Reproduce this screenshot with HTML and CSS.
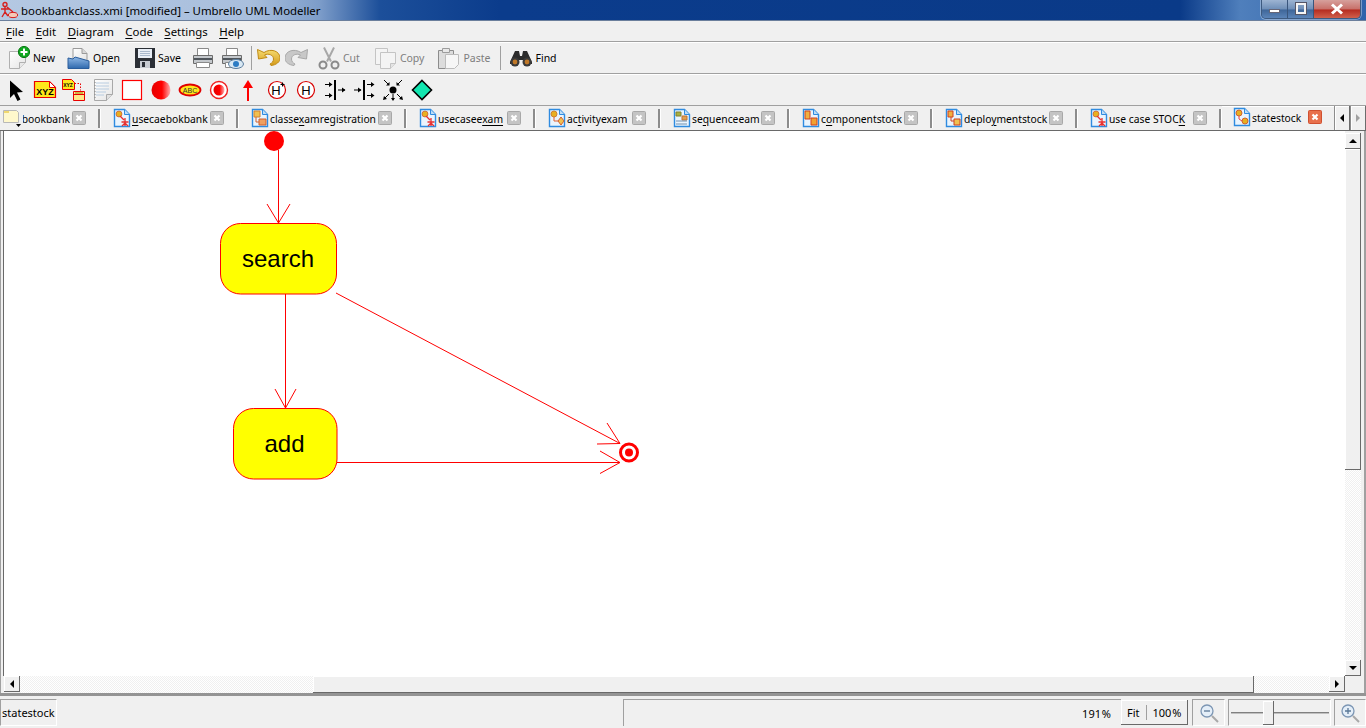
FILE: index.html
```html
<!DOCTYPE html>
<html lang="en">
<head>
  <meta charset="UTF-8">
  <title>bookbankclass.xmi [modified] – Umbrello UML Modeller</title>
  <link rel="stylesheet" href="styles.css">
</head>
<body>
  <svg class="defs" width="0" height="0">
    <defs>
      <linearGradient id="ball" x1="0" x2="1" y1="0" y2="0">
        <stop offset="0" stop-color="#e60000"/><stop offset=".55" stop-color="#ff0000"/><stop offset="1" stop-color="#ffb0b0"/>
      </linearGradient>
      <linearGradient id="sheet" x1="0" x2="1" y1="0" y2="1">
        <stop offset="0" stop-color="#ffffff"/><stop offset="1" stop-color="#e4e4e4"/>
      </linearGradient>
      <linearGradient id="blueFolder" x1="0" x2="0" y1="0" y2="1">
        <stop offset="0" stop-color="#8fb8e6"/><stop offset="1" stop-color="#2f69ad"/>
      </linearGradient>
      <linearGradient id="gold" x1="0" x2="0" y1="0" y2="1">
        <stop offset="0" stop-color="#f6dc70"/><stop offset="1" stop-color="#d49a18"/>
      </linearGradient>
      <symbol id="tabdoc" viewBox="0 0 18 20">
        <path d="M1.5 1.5h10l5 5v12h-15z" fill="#eaf4fd" stroke="#2f8be0" stroke-width="1.4"/>
        <path d="M11.5 1.5v5h5" fill="#bcdcf6" stroke="#2f8be0"/>
      </symbol>
      <symbol id="close" viewBox="0 0 14 14">
        <rect x=".5" y=".5" width="13" height="13" rx="1" fill="#c4c4c4" stroke="#a8a8a8"/>
        <path d="M4.5 4.5l5 5m0-5l-5 5" stroke="#fff" stroke-width="2.2"/>
      </symbol>
    </defs>
  </svg>

  <header class="titlebar">
    <svg class="app-icon" width="18" height="18" viewBox="0 0 18 18">
      <circle cx="4" cy="3.5" r="2" fill="none" stroke="#d62020" stroke-width="1.4"/>
      <path d="M4 6v5M0 8h8M4 11l-3 5M4 11l3 4M6 6l6 5" stroke="#d62020" stroke-width="1.4" fill="none"/>
      <ellipse cx="12" cy="14" rx="4.6" ry="2.6" fill="#f5c9b8" stroke="#d62020"/>
    </svg>
    <span class="title-text">bookbankclass.xmi [modified] – Umbrello UML Modeller</span>
    <div class="win-buttons">
      <div class="win-btn win-min"><i></i></div>
      <div class="win-btn win-max"><i></i></div>
      <div class="win-btn win-close">
        <svg width="16" height="12" viewBox="0 0 16 12"><path d="M3 1.5l10 9m0-9l-10 9" stroke="#fff" stroke-width="3"/></svg>
      </div>
    </div>
  </header>

  <nav class="menubar">
    <span><u>F</u>ile</span>
    <span><u>E</u>dit</span>
    <span><u>D</u>iagram</span>
    <span><u>C</u>ode</span>
    <span><u>S</u>ettings</span>
    <span><u>H</u>elp</span>
  </nav>

  <div class="toolbar main-tools">
    <div class="tool tool-new">
      <svg width="24" height="24" viewBox="0 0 24 24">
        <path d="M2.5 5.5h11l5 0v11l-6 6h-10z" fill="url(#sheet)" stroke="#b0b0b0"/>
        <path d="M12.5 22.5v-6h6" fill="#e8e8e8" stroke="#b0b0b0"/>
        <circle cx="17" cy="6" r="5.6" fill="#10a820" stroke="#0a7a14"/>
        <path d="M17 2.5v7M13.5 6h7" stroke="#fff" stroke-width="2"/>
      </svg>
      <span>New</span>
    </div>
    <div class="tool tool-open">
      <svg width="24" height="24" viewBox="0 0 24 24">
        <path d="M6 2.500h9l5 5v7H6z" fill="url(#sheet)" stroke="#9a9a9a"/>
        <path d="M15 2.500v5h5" fill="#d8d8d8" stroke="#9a9a9a"/>
        <path d="M1 12l5 1 2-2 14 4v7.500H1z" fill="url(#blueFolder)" stroke="#2a5d9c"/>
      </svg>
      <span>Open</span>
    </div>
    <div class="tool tool-save">
      <svg width="22" height="24" viewBox="0 0 22 24">
        <path d="M1 2h20v20H1z" fill="#2b2f36"/>
        <path d="M4 3h14v9H4z" fill="#e8eef6"/>
        <path d="M6 5.500h10M6 7.500h10M6 9.500h10" stroke="#a8b8cc"/>
        <path d="M6 15h10v7H6z" fill="#c8ccd2"/><path d="M8 16h3v5H8z" fill="#2b2f36"/>
      </svg>
      <span>Save</span>
    </div>
    <div class="tool tool-print">
      <svg width="24" height="24" viewBox="0 0 24 24">
        <path d="M6.500 2.500h11v7h-11z" fill="#fff" stroke="#8a8a8a"/>
        <path d="M2.500 9.500h19v8h-19z" fill="#c4c8cc" stroke="#6c6c6c"/>
        <path d="M3 13h18" stroke="#50565c" stroke-width="2"/>
        <path d="M5.500 16.500h13v5h-13z" fill="#fff" stroke="#8a8a8a"/>
      </svg>
    </div>
    <div class="tool tool-preview">
      <svg width="24" height="24" viewBox="0 0 24 24">
        <path d="M6.500 2.500h11v7h-11z" fill="#fff" stroke="#8a8a8a"/>
        <path d="M2.500 9.500h19v8h-19z" fill="#c4c8cc" stroke="#6c6c6c"/>
        <path d="M3 13h18" stroke="#50565c" stroke-width="2"/>
        <path d="M5.500 16.500h9v5h-9z" fill="#fff" stroke="#8a8a8a"/>
        <ellipse cx="16" cy="18" rx="7.500" ry="4.500" fill="#d8e8f4" stroke="#5a7c9c"/>
        <circle cx="16" cy="18" r="3" fill="#2c7cc4"/>
      </svg>
    </div>
    <div class="tool-sep"></div>
    <div class="tool tool-undo">
      <svg width="24" height="24" viewBox="0 0 24 24">
        <path d="M1.500 3.500l1 9.500 8.500-1.500-2.500-2.500c4-2 9 0 9 4 0 2.500-1.500 4-3.500 5l1 1.500c5-.5 9.500-3.500 9-8-.5-6.500-9-9.500-16-5z" fill="url(#gold)" stroke="#c08a14"/>
      </svg>
    </div>
    <div class="tool tool-redo">
      <svg width="24" height="24" viewBox="0 0 24 24">
        <path d="M22.500 3.500l-1 9.500-8.500-1.500 2.500-2.500c-4-2-9 0-9 4 0 2.500 1.500 4 3.500 5l-1 1.500c-5-.5-9.500-3.500-9-8 .5-6.500 9-9.500 16-5z" fill="#c8c8c8" stroke="#a8a8a8"/>
      </svg>
    </div>
    <div class="tool tool-cut off">
      <svg width="24" height="24" viewBox="0 0 24 24">
        <path d="M7 1.500l7 14M17 1.500l-7 14" stroke="#a8a8a8" stroke-width="2" fill="none"/>
        <circle cx="6" cy="19" r="3.500" fill="none" stroke="#8a8a8a" stroke-width="2"/>
        <circle cx="18" cy="19" r="3.500" fill="none" stroke="#8a8a8a" stroke-width="2"/>
      </svg>
      <span>Cut</span>
    </div>
    <div class="tool tool-copy off">
      <svg width="24" height="24" viewBox="0 0 24 24">
        <path d="M1.500 2.500h12v16h-12z" fill="#f4f4f4" stroke="#c4c4c4"/>
        <path d="M6.500 6.500h15v11l-5 5h-10z" fill="#f4f4f4" stroke="#c4c4c4"/>
        <path d="M16.500 22.500v-5h5" fill="#e4e4e4" stroke="#c4c4c4"/>
      </svg>
      <span>Copy</span>
    </div>
    <div class="tool tool-paste off">
      <svg width="24" height="24" viewBox="0 0 24 24">
        <path d="M1.500 4.500h15v18h-15z" fill="#dcdcdc" stroke="#8c8c8c"/>
        <path d="M5.500 2.500h7v4h-7z" fill="#e8e8e8" stroke="#9c9c9c"/>
        <path d="M8.500 8.500h13v10l-4 4h-9z" fill="#f6f6f6" stroke="#bcbcbc"/>
      </svg>
      <span>Paste</span>
    </div>
    <div class="tool-sep sep-find"></div>
    <div class="tool tool-find">
      <svg width="24" height="24" viewBox="0 0 24 24">
        <path d="M6 5h4l1 5h2l1-5h4l5 11v2H14v-4h-4v4H1v-2z" fill="#2c2c2c"/>
        <circle cx="6" cy="16" r="4.500" fill="#3a3a3a"/><circle cx="18" cy="16" r="4.500" fill="#3a3a3a"/>
        <circle cx="6" cy="16" r="2.400" fill="#c07828"/><circle cx="18" cy="16" r="2.400" fill="#c07828"/>
      </svg>
      <span>Find</span>
    </div>
  </div>

  <div class="toolbar shape-tools">
    <div class="shape">
      <svg width="24" height="24" viewBox="0 0 24 24"><path d="M6 2.500l13 11.500-6 .5 3.500 7-3 1.500-3.500-7-4 4z" fill="#000"/></svg>
    </div>
    <div class="shape">
      <svg width="24" height="24" viewBox="0 0 24 24">
        <path d="M1.500 3.500h15l6 6v10h-21z" fill="#ffe61a" stroke="#e80000" stroke-width="1.200"/>
        <path d="M16.500 3.500v6h6z" fill="#fff" stroke="#e80000"/>
        <text class="xyz" x="12" y="17">XYZ</text>
      </svg>
    </div>
    <div class="shape">
      <svg width="24" height="24" viewBox="0 0 24 24">
        <path d="M.5 1.500h9l3 3v7h-12z" fill="#ffe61a" stroke="#e80000"/>
        <text class="xyz-small" x="6" y="9">XYZ</text>
        <path d="M12.500 5.500h6v7" fill="none" stroke="#e80000" stroke-dasharray="1.500 1.500"/>
        <path d="M11.500 13.500h11v9h-11z" fill="#ffe98a" stroke="#e80000"/>
        <path d="M11.500 16.500h11" stroke="#e80000"/><path d="M13 15h8" stroke="#a08000"/>
      </svg>
    </div>
    <div class="shape">
      <svg width="24" height="24" viewBox="0 0 24 24">
        <path d="M3.500 1.500h18v15l-6 6h-12z" fill="url(#sheet)" stroke="#a8a8a8"/>
        <path d="M15.500 22.500v-6h6" fill="#e0e0e0" stroke="#a8a8a8"/>
        <path d="M5 5h13M5 8h13M5 11h13M5 14h10M5 17h8" stroke="#b8cce0"/>
        <path d="M4 4v16" stroke="#888" stroke-dasharray="1 2"/>
      </svg>
    </div>
    <div class="shape">
      <svg width="24" height="24" viewBox="0 0 24 24"><rect x="2.500" y="2.500" width="19" height="19" fill="#fff" stroke="#f00" stroke-width="1.200"/></svg>
    </div>
    <div class="shape">
      <svg width="24" height="24" viewBox="0 0 24 24"><circle cx="12" cy="12" r="9.500" fill="url(#ball)"/></svg>
    </div>
    <div class="shape">
      <svg width="24" height="24" viewBox="0 0 24 24">
        <ellipse cx="12" cy="12" rx="10.500" ry="5.500" fill="#ffe61a" stroke="#e00000" stroke-width="1.800"/>
        <text class="abc" x="12" y="14.500">ABC</text>
      </svg>
    </div>
    <div class="shape">
      <svg width="24" height="24" viewBox="0 0 24 24">
        <circle cx="12" cy="12" r="8.500" fill="#fff" stroke="#f02020" stroke-width="1.400"/>
        <circle cx="12" cy="12" r="5.500" fill="url(#ball)"/>
      </svg>
    </div>
    <div class="shape">
      <svg width="24" height="24" viewBox="0 0 24 24"><path d="M12 2l5 8h-4v13h-2V10H7z" fill="#f00"/></svg>
    </div>
    <div class="shape">
      <svg width="24" height="24" viewBox="0 0 24 24">
        <circle cx="12" cy="12" r="8.500" fill="#fff" stroke="#d80000" stroke-width="1.200"/>
        <text class="hist" x="11" y="16.500">H</text>
        <path d="M15.500 6.500h4M17.500 4.500v4" stroke="#000"/>
      </svg>
    </div>
    <div class="shape">
      <svg width="24" height="24" viewBox="0 0 24 24">
        <circle cx="12" cy="12" r="8.500" fill="#fff" stroke="#d80000" stroke-width="1.200"/>
        <text class="hist" x="12" y="16.500">H</text>
      </svg>
    </div>
    <div class="shape">
      <svg width="24" height="24" viewBox="0 0 24 24">
        <path d="M11 2h2v20h-2z"/>
        <path d="M2 6.500h7M2 17.500h7M15 12h7" stroke="#000"/>
        <path d="M6 4l3.500 2.500L6 9zM6 15l3.500 2.500L6 20zM19 9.500l3.500 2.500-3.500 2.500z"/>
      </svg>
    </div>
    <div class="shape">
      <svg width="24" height="24" viewBox="0 0 24 24">
        <path d="M11 2h2v20h-2z"/>
        <path d="M15 6.500h7M15 17.500h7M2 12h7" stroke="#000"/>
        <path d="M19 4l3.500 2.500L19 9zM19 15l3.500 2.500L19 20zM6 9.500l3.500 2.500L6 14.500z"/>
      </svg>
    </div>
    <div class="shape">
      <svg width="24" height="24" viewBox="0 0 24 24">
        <circle cx="12" cy="12" r="3.500"/>
        <path d="M3 2l5 5M21 2l-5 5M4 20l4-4M20 20l-4-4M12 16v6" stroke="#000" fill="none"/>
        <path d="M8.500 7.500V4l-3.500 3.500zM15.500 7.500V4l3.500 3.500zM2 22l1-4 3 3zM22 22l-1-4-3 3zM10 20h4l-2 3z"/>
      </svg>
    </div>
    <div class="shape">
      <svg width="24" height="24" viewBox="0 0 24 24"><path d="M12 2.500l9.500 9.500-9.500 9.500L2.500 12z" fill="#12e6b0" stroke="#000" stroke-width="1.600"/></svg>
    </div>
  </div>

  <div class="tabs">
    <div class="tab first-tab">
      <svg class="folder-icon" width="20" height="20" viewBox="0 0 20 20">
        <path d="M1.500 2.500h13l2 2v10h-15z" fill="#fff8cc" stroke="#b8b8b8"/>
        <path d="M2 3h5v2H2z" fill="#f0d870"/>
        <path d="M14 16h5l-2.500 3z" fill="#000"/>
      </svg>
      <span class="tab-name clip"><span>bookbank</span></span>
      <svg class="tab-close" width="14" height="14"><use href="#close"/></svg>
    </div>
    <div class="tab">
      <svg class="tab-icon" width="18" height="20" viewBox="0 0 18 20"><use href="#tabdoc" width="18" height="20"/><circle cx="6" cy="6" r="3" fill="#e8b020" stroke="#c04030" stroke-width=".6"/><path d="M12 10v8M8.500 14h7M12 15l-3 3M12 15l3 3M7 8l4 4" stroke="#e83030" stroke-width="1.300" fill="none"/></svg>
      <span class="tab-name"><u>u</u>secaebokbank</span>
      <svg class="tab-close" width="14" height="14"><use href="#close"/></svg>
    </div>
    <div class="tab">
      <svg class="tab-icon" width="18" height="20" viewBox="0 0 18 20"><use href="#tabdoc" width="18" height="20"/><path d="M3 3h6v6H3z" fill="#f0c050" stroke="#d08030"/><path d="M8 11h7v6H8z" fill="#f0a060" stroke="#d06030"/><path d="M5 9v5h3" stroke="#d06030" fill="none"/></svg>
      <span class="tab-name">classe<u>x</u>amregistration</span>
      <svg class="tab-close" width="14" height="14"><use href="#close"/></svg>
    </div>
    <div class="tab">
      <svg class="tab-icon" width="18" height="20" viewBox="0 0 18 20"><use href="#tabdoc" width="18" height="20"/><circle cx="6" cy="6" r="3" fill="#e8b020" stroke="#c04030" stroke-width=".6"/><path d="M12 10v8M8.500 14h7M12 15l-3 3M12 15l3 3M7 8l4 4" stroke="#e83030" stroke-width="1.300" fill="none"/></svg>
      <span class="tab-name">usecasee<u>xam</u></span>
      <svg class="tab-close" width="14" height="14"><use href="#close"/></svg>
    </div>
    <div class="tab">
      <svg class="tab-icon" width="18" height="20" viewBox="0 0 18 20"><use href="#tabdoc" width="18" height="20"/><circle cx="6" cy="6" r="3" fill="#e8b020" stroke="#d08030"/><path d="M6 9v4h4" stroke="#e06030" fill="none"/><path d="M13 9l3 4-3 4-3-4z" fill="#f0c050" stroke="#d06030"/></svg>
      <span class="tab-name">ac<u>t</u>ivityexam</span>
      <svg class="tab-close" width="14" height="14"><use href="#close"/></svg>
    </div>
    <div class="tab">
      <svg class="tab-icon" width="18" height="20" viewBox="0 0 18 20"><use href="#tabdoc" width="18" height="20"/><path d="M3 4h5v4H3z" fill="#a8b040" stroke="#808030"/><path d="M9 8h5v4H9z" fill="#e0a050" stroke="#c07030"/><path d="M3 13h11M3 16h11" stroke="#7090b0"/></svg>
      <span class="tab-name">se<u>q</u>uenceeam</span>
      <svg class="tab-close" width="14" height="14"><use href="#close"/></svg>
    </div>
    <div class="tab">
      <svg class="tab-icon" width="18" height="20" viewBox="0 0 18 20"><use href="#tabdoc" width="18" height="20"/><path d="M3 3h5v8H3z" fill="#f0b040" stroke="#d04020"/><path d="M9 10h6v7H9z" fill="#f0a030" stroke="#d04020"/></svg>
      <span class="tab-name">c<u>o</u>mponentstock</span>
      <svg class="tab-close" width="14" height="14"><use href="#close"/></svg>
    </div>
    <div class="tab">
      <svg class="tab-icon" width="18" height="20" viewBox="0 0 18 20"><use href="#tabdoc" width="18" height="20"/><path d="M3 3h5v6H3z" fill="#f0b040" stroke="#d04020"/><path d="M9 11h6v6H9z" fill="#f0c050" stroke="#d04020"/><path d="M6 9v4h3" stroke="#d04020" fill="none"/></svg>
      <span class="tab-name">deplo<u>y</u>mentstock</span>
      <svg class="tab-close" width="14" height="14"><use href="#close"/></svg>
    </div>
    <div class="tab">
      <svg class="tab-icon" width="18" height="20" viewBox="0 0 18 20"><use href="#tabdoc" width="18" height="20"/><circle cx="6" cy="6" r="3" fill="#e8b020" stroke="#c04030" stroke-width=".6"/><path d="M12 10v8M8.500 14h7M12 15l-3 3M12 15l3 3M7 8l4 4" stroke="#e83030" stroke-width="1.300" fill="none"/></svg>
      <span class="tab-name">use case STOC<u>K</u></span>
      <svg class="tab-close" width="14" height="14"><use href="#close"/></svg>
    </div>
    <div class="tab active">
      <svg class="tab-icon" width="18" height="20" viewBox="0 0 18 20"><use href="#tabdoc" width="18" height="20"/><circle cx="6" cy="6" r="3" fill="#e8b020" stroke="#d06030"/><circle cx="12" cy="14" r="3" fill="#e8b020" stroke="#d06030"/><path d="M6 9v3l3 2" stroke="#f04040" fill="none"/></svg>
      <span class="tab-name">statestock</span>
      <svg class="tab-close" width="14" height="14" viewBox="0 0 14 14">
        <rect x=".5" y=".5" width="13" height="13" rx="1" fill="#e8704c" stroke="#d05030"/>
        <path d="M4.500 4.500l5 5m0-5l-5 5" stroke="#fff" stroke-width="2.200"/>
      </svg>
    </div>
    <div class="tab-scroll">
      <div class="tab-arrow"><i class="tri-left"></i></div>
      <div class="tab-arrow"><i class="tri-right tri-off"></i></div>
    </div>
  </div>

  <main class="workspace">
    <div class="canvas">
      <svg class="diagram" width="1342" height="545" viewBox="4 131 1342 545">
        <g class="links">
          <path d="M278.500 150V223M267 204l11.500 19 11.500-19"/>
          <path d="M285.500 294V408M275 389l10.500 19 10.500-19"/>
          <path d="M336 293L620 443.500M607 423l13 20.500-23 .5"/>
          <path d="M337 462.500H620M600 451l20 11.500-20 11"/>
        </g>
        <circle cx="274" cy="141" r="10" fill="#f00"/>
        <rect class="state" x="220.500" y="223.500" width="116" height="70.500" rx="20"/>
        <text class="state-name" x="278" y="267">search</text>
        <rect class="state" x="233.500" y="408.500" width="103.500" height="70.500" rx="20"/>
        <text class="state-name" x="284.500" y="452">add</text>
        <circle cx="629" cy="452.500" r="8.500" fill="#fff" stroke="#f00" stroke-width="3"/>
        <circle cx="629" cy="452.500" r="4" fill="#f00"/>
      </svg>
    </div>
    <div class="vscroll">
      <div class="sb-btn"><i class="tri-up"></i></div>
      <div class="v-thumb"></div>
      <div class="track"></div>
      <div class="sb-btn"><i class="tri-down"></i></div>
    </div>
    <div class="hscroll">
      <div class="sb-btn"><i class="tri-left"></i></div>
      <div class="h-before track"></div>
      <div class="h-thumb"></div>
      <div class="track"></div>
      <div class="sb-btn"><i class="tri-right"></i></div>
    </div>
    <div class="corner"></div>
  </main>

  <footer class="statusbar">
    <div class="status-doc">statestock</div>
    <div class="status-gap"></div>
    <div class="status-panel"><span>191 %</span></div>
    <div class="fit-buttons"><span>Fit</span><i></i><span>100 %</span></div>
    <div class="zoom-box zoom-out">
      <svg width="24" height="24" viewBox="0 0 24 24">
        <circle cx="10" cy="10" r="6" fill="#e4eef8" stroke="#7c96b4" stroke-width="1.300"/>
        <path d="M7 10h6" stroke="#5a7896" stroke-width="1.300"/>
        <path d="M15 15l6 6" stroke="#a8a8a8" stroke-width="2"/>
      </svg>
    </div>
    <div class="zoom-box zoom-slider">
      <div class="slider-line"></div>
      <div class="slider-handle"></div>
    </div>
    <div class="zoom-box zoom-in">
      <svg width="24" height="24" viewBox="0 0 24 24">
        <circle cx="10" cy="10" r="6" fill="#e4eef8" stroke="#7c96b4" stroke-width="1.300"/>
        <path d="M7 10h6M10 7v6" stroke="#5a7896" stroke-width="1.300"/>
        <path d="M15 15l6 6" stroke="#a8a8a8" stroke-width="2"/>
      </svg>
    </div>
  </footer>
</body>
</html>
```

FILE: styles.css
```css
* {
  box-sizing: border-box;
}

html, body {
  margin: 0;
  height: 728px;
  overflow: hidden;
}

body {
  background-color: #f0f0f0;
  color: #000;
  font-family: "Noto Sans", "Open Sans", sans-serif;
  font-size: 10.500px;
}

.defs {
  display: block;
  height: 0;
}

svg {
  display: block;
  flex: none;
}

u {
  text-underline-offset: 2px;
}

/* title bar */
.titlebar {
  display: flex;
  align-items: center;
  height: 21px;
  padding-left: 1px;
  border-bottom: 1px solid #6b7f9c;
  background: linear-gradient(90deg, #b4c8e2 0, #a9bfdd 250px, #7c9cc9 320px, #1c4f9a 380px, #0b3c8c 500px, #0a3a88 1180px, #4f7fbc 1240px, #2f63ab 1366px);
}

.app-icon {
  margin-right: 2px;
}

.title-text {
  font-size: 11.400px;
  color: #000;
  white-space: nowrap;
}

.win-buttons {
  display: flex;
  margin-left: auto;
  margin-right: 5px;
  height: 19px;
  margin-top: -2px;
  border: 1px solid #3d5a80;
  border-top: 0;
  border-radius: 0 0 5px 5px;
  overflow: hidden;
  box-shadow: 0 0 0 1px rgba(255, 255, 255, .35);
}

.win-btn {
  display: flex;
  align-items: center;
  justify-content: center;
  height: 100%;
}

.win-min, .win-max {
  width: 26px;
  background: linear-gradient(#9db4d2, #6f8fb8 50%, #3f6699 55%, #5b84b8);
  border-right: 1px solid #39557c;
}

.win-min i {
  width: 11px;
  height: 4px;
  margin-top: 5px;
  background: #fff;
  border: 1px solid #667;
}

.win-max i {
  width: 10px;
  height: 11px;
  border: 2px solid #f4f4f4;
  outline: 1px solid #556;
}

.win-close {
  width: 46px;
  background: linear-gradient(#d6a09c, #c8706a 50%, #b52c20 55%, #d0604c);
}

/* menu */
.menubar {
  display: flex;
  align-items: center;
  gap: 11.500px;
  height: 21px;
  padding-left: 6px;
  border-bottom: 1px solid #a0a0a0;
  font-size: 11.400px;
}

/* toolbars */
.toolbar {
  display: flex;
  align-items: center;
  height: 32px;
  border-top: 1px solid #fff;
  border-bottom: 1px solid #a0a0a0;
}

.main-tools {
  padding-left: 7px;
}

.tool {
  display: flex;
  align-items: center;
  gap: 2px;
  color: #000;
  white-space: nowrap;
}

.tool span {
  padding-bottom: 1px;
}

.tool.off {
  color: #7e7e7e;
}

.tool-open { margin-left: 12px; }
.tool-save { margin-left: 14px; }
.tool-print { margin-left: 10px; }
.tool-preview { margin-left: 5px; }
.tool-undo { margin-left: 4px; }
.tool-redo { margin-left: 5px; }
.tool-cut { margin-left: 8px; }
.tool-copy { margin-left: 14px; }
.tool-paste { margin-left: 13px; }
.tool-find { margin-left: 8px; }

.tool-sep {
  width: 1px;
  height: 24px;
  margin-left: 7px;
  background: #a0a0a0;
}

.sep-find {
  margin-left: 10px;
}

.shape-tools {
  gap: 5px;
  padding-left: 4px;
}

.shape {
  width: 24px;
  height: 24px;
}

.xyz {
  font: bold 9px "Liberation Sans", sans-serif;
  text-anchor: middle;
}

.xyz-small {
  font: bold 5px "Liberation Sans", sans-serif;
  text-anchor: middle;
}

.abc {
  font: 7px "Liberation Sans", sans-serif;
  text-anchor: middle;
  fill: #333;
}

.hist {
  font: 13px "Liberation Sans", sans-serif;
  text-anchor: middle;
}

/* tabs */
.tabs {
  display: grid;
  grid-template-columns: 101px 138px 168px 129px 125px 129px 143px 145px 144px 112px 33px;
  height: 24px;
}

.tab {
  display: flex;
  align-items: center;
  gap: 1px;
  padding-left: 12px;
  white-space: nowrap;
  overflow: hidden;
}

.tab-name {
  padding-top: 1px;
  font-size: 10.300px;
}

/* the divider only spans the middle of the strip */
.tab::after {
  content: "";
  flex: none;
  width: 2px;
  height: 19px;
  background: #8c8c8c;
  border-right: 1px solid #fff;
}

.first-tab {
  padding-left: 2px;
}

.first-tab .tab-name {
  display: flex;
  justify-content: flex-end;
  width: 47px;
  overflow: hidden;
}

.tab .tab-close {
  margin-left: auto;
  margin-right: 11px;
}

.tab.active {
  padding-left: 11px;
  padding-bottom: 3px;
  border-top: 1px solid #fff;
}

.tab.active::after {
  display: none;
}

.tab.active .tab-close {
  margin-right: 12px;
}

.tab-scroll {
  display: flex;
}

.tab-arrow {
  display: flex;
  align-items: center;
  justify-content: center;
  width: 16px;
  height: 24px;
  border-left: 1px solid #8c8c8c;
  border-right: 1px solid #6c6c6c;
  box-shadow: inset 1px 1px 0 #fff;
}

/* little triangles for arrows */
i[class^="tri-"] {
  width: 0;
  height: 0;
  display: block;
  border: 4px solid transparent;
}

.tri-left {
  border-right-color: #000 !important;
  border-left-width: 0 !important;
}

.tri-right {
  border-left-color: #000 !important;
  border-right-width: 0 !important;
}

.tri-right.tri-off {
  border-left-color: #a0a0a0 !important;
}

.tri-up {
  border-bottom-color: #000 !important;
  border-top-width: 0 !important;
}

.tri-down {
  border-top-color: #000 !important;
  border-bottom-width: 0 !important;
}

/* drawing area */
.workspace {
  display: grid;
  grid-template-columns: 1342px 16px;
  grid-template-rows: 545px 17px;
  height: 566px;
  padding-left: 3px;
  padding-right: 5px;
  border-top: 1px solid #696969;
  border-bottom: 3px solid #949494;
  box-shadow: inset 1px 0 0 #a0a0a0, inset -2px 0 0 #a0a0a0;
}

.canvas {
  border-left: 1px solid #696969;
  background: #fff;
  overflow: hidden;
}

.links path {
  fill: none;
  stroke: #f00;
  stroke-width: 1;
}

.state {
  fill: #ff0;
  stroke: #f00;
  stroke-width: 1;
}

.state-name {
  font: 24px "Liberation Sans", sans-serif;
  text-anchor: middle;
}

.vscroll {
  display: flex;
  flex-direction: column;
  padding-top: 2px;
}

.hscroll {
  display: flex;
  padding-left: 1px;
}

.sb-btn {
  display: flex;
  align-items: center;
  justify-content: center;
  flex: none;
  width: 16px;
  height: 16px;
  background: #f0f0f0;
  border-right: 1px solid #696969;
  border-bottom: 1px solid #696969;
  box-shadow: inset 1px 1px 0 #fff;
}

.track {
  flex: 1;
  background: repeating-conic-gradient(#fff 0 25%, #f0f0f0 0 50%) 0 0 / 2px 2px;
}

.v-thumb {
  flex: none;
  height: 321px;
  background: #f0f0f0;
  border-right: 1px solid #696969;
  border-bottom: 1px solid #696969;
  box-shadow: inset 1px 1px 0 #fff;
}

.h-before {
  flex: none;
  width: 293px;
}

.h-thumb {
  flex: none;
  width: 941px;
  background: #f0f0f0;
  border-right: 1px solid #696969;
  border-bottom: 1px solid #696969;
  box-shadow: inset 1px 1px 0 #fff;
}

.corner {
  background: #f0f0f0;
}

/* status bar */
.statusbar {
  display: flex;
  align-items: stretch;
  height: 32px;
  padding: 3px 0 2px;
  font-size: 11px;
  white-space: nowrap;
}

.status-doc {
  display: flex;
  align-items: center;
  width: 57px;
  padding-left: 1px;
  border-top: 1px solid #a0a0a0;
  border-left: 1px solid #a0a0a0;
  border-right: 1px solid #fff;
  border-bottom: 1px solid #fff;
}

.status-gap {
  width: 566px;
}

.status-panel {
  display: flex;
  align-items: center;
  justify-content: flex-end;
  width: 498px;
  padding-right: 10px;
  border-top: 1px solid #a0a0a0;
  border-left: 1px solid #a0a0a0;
  word-spacing: -2px;
}

.fit-buttons {
  display: flex;
  align-items: center;
  width: 67px;
  margin: 1px 0;
  padding-left: 6px;
  border-right: 1px solid #696969;
  border-bottom: 1px solid #696969;
  box-shadow: inset 1px 1px 0 #fff;
  word-spacing: -2px;
}

.fit-buttons i {
  width: 1px;
  height: 15px;
  margin: 0 6px;
  background: #a0a0a0;
}

.zoom-box {
  display: flex;
  align-items: center;
  justify-content: center;
  border-top: 1px solid #a0a0a0;
  border-left: 1px solid #a0a0a0;
  border-right: 1px solid #fff;
  border-bottom: 1px solid #fff;
}

.zoom-out {
  width: 33px;
  margin-left: 4px;
}

.zoom-slider {
  position: relative;
  width: 103px;
  margin-left: 3px;
}

.slider-line {
  width: 98px;
  height: 2px;
  background: #808080;
  border-bottom: 1px solid #c0c0c0;
}

.slider-handle {
  position: absolute;
  top: 1px;
  left: 34px;
  width: 11px;
  height: 24px;
  background: #f0f0f0;
  border-right: 1px solid #696969;
  border-bottom: 1px solid #696969;
  box-shadow: inset 1px 1px 0 #fff;
}

.zoom-in {
  width: 32px;
  margin-left: 3px;
}
```
